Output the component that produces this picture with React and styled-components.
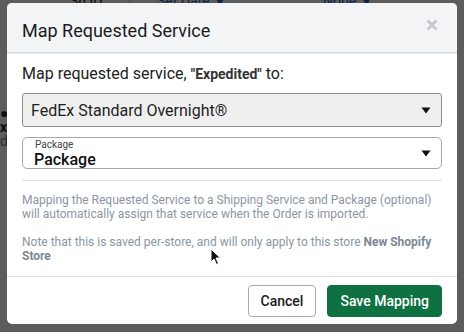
import React from 'react'
import styled, { createGlobalStyle } from 'styled-components'

const GlobalStyle = createGlobalStyle`
  html, body {
    margin: 0;
    padding: 0;
    width: 464px;
    height: 332px;
    overflow: hidden;
    background: #fff;
    font-family: Roboto, "Liberation Sans", Arial, sans-serif;
  }
`

const Screen = styled.div`
  position: relative;
  width: 464px;
  height: 332px;
  overflow: hidden;
`

const Page = styled.div`
  display: flex;
  flex-direction: column;
  margin-top: -9px;
`

const PageHead = styled.div`
  display: flex;
  align-items: center;
  height: 20px;
  font-size: 14px;
`

const HeadCell = styled.div`
  width: ${p => p.w}px;
  padding-left: ${p => p.pad || 0}px;
  color: ${p => (p.link ? '#2a5db0' : '#222')};
  border-right: ${p => (p.sep ? '1px solid #ccc' : 'none')};
  box-sizing: border-box;
`

const PageRow = styled.div`
  height: 14px;
  line-height: 14px;
  font-size: 14px;
  color: ${p => p.c || '#222'};
  margin-top: ${p => p.mt || 0}px;
`

const Backdrop = styled.div`
  position: absolute;
  inset: 0;
  background: rgba(0, 0, 0, 0.64);
`

const Modal = styled.div`
  position: absolute;
  left: 7px;
  top: 3px;
  width: 450px;
  height: 321px;
  background: #fff;
  border-radius: 5px;
  display: flex;
  flex-direction: column;
  overflow: hidden;
`

const Header = styled.div`
  display: flex;
  align-items: center;
  justify-content: space-between;
  height: 49px;
  flex-shrink: 0;
  padding: 0 17px 0 15px;
  background: #f3f4f6;
  border-bottom: 1px solid #d3d6d9;
  box-shadow: 0 1px 1px rgba(0, 0, 0, 0.06);
`

const Title = styled.h2`
  margin: 0;
  font-size: 18px;
  font-weight: 400;
  color: #1b1b1b;
  padding-top: 6px;
`

const Close = styled.button`
  border: 0;
  background: none;
  padding: 0;
  width: 14px;
  height: 14px;
  margin-top: -4px;
  display: flex;
`

const Body = styled.div`
  padding: 11px 15px 0 15px;
  display: flex;
  flex-direction: column;
  flex: 1;
`

const Prompt = styled.div`
  font-size: 16px;
  color: #222;
  line-height: 20px;
  b {
    font-size: 14px;
    font-weight: 700;
    color: #333;
  }
`

const Select = styled.div`
  display: flex;
  align-items: center;
  justify-content: space-between;
  height: ${p => p.h}px;
  margin-top: ${p => p.mt}px;
  box-sizing: border-box;
  padding: 0 10px 0 ${p => (p.stacked ? 11 : 8)}px;
  background: ${p => (p.filled ? '#efefef' : '#fff')};
  border: 1px solid ${p => (p.filled ? '#8f8f8f' : '#a8a8a8')};
  border-radius: ${p => (p.filled ? 3 : 5)}px;
  font-size: 16px;
  color: #1e1e1e;
`

const Stack = styled.div`
  display: flex;
  flex-direction: column;
  padding-top: 1px;
`

const SmallLabel = styled.span`
  font-size: 10px;
  color: #444;
  line-height: 11px;
  margin-left: 1px;
`

const BigValue = styled.span`
  font-size: 16px;
  font-weight: 500;
  color: #111;
  line-height: 19px;
`

const Divider = styled.hr`
  border: 0;
  border-top: 1px solid #dde3e8;
  margin: 11px 0 12px 0;
`

const Note = styled.p`
  margin: 0 0 ${p => p.mb || 0}px 0;
  font-size: 12px;
  line-height: 14px;
  color: #8a96a3;
  b {
    font-weight: 700;
    color: #7c8894;
  }
`

const Footer = styled.div`
  display: flex;
  justify-content: flex-end;
  flex-shrink: 0;
  gap: 11px;
  padding: 8px 15px 0 0;
  height: 48px;
  box-sizing: border-box;
  border-top: 1px solid #dfe2e5;
`

const Button = styled.button`
  height: 32px;
  padding: 0 12px;
  font-family: Roboto, "Liberation Sans", Arial, sans-serif;
  font-size: 14px;
  font-weight: 500;
  border-radius: 4px;
  border: 1px solid ${p => (p.primary ? '#0f7041' : '#a9a9a9')};
  background: ${p => (p.primary ? '#0f7041' : '#fff')};
  color: ${p => (p.primary ? '#fff' : '#1a1a1a')};
  box-sizing: border-box;
`

const Cursor = styled.svg`
  position: absolute;
  left: 210px;
  top: 248px;
`

const Caret = () => (
  <svg width="10" height="7" viewBox="0 0 10 7">
    <path d="M0.5 0.5 H9.5 L5 6.5 Z" fill="#111" />
  </svg>
)

export default function App() {
  return (
    <Screen>
      <GlobalStyle />
      <Page>
        <PageHead>
          <HeadCell w={130} pad={70} sep>Sh ID</HeadCell>
          <HeadCell w={190} pad={27} link>Set Date ▼</HeadCell>
          <HeadCell w={144} pad={3} link>None ▼</HeadCell>
        </PageHead>
        <PageRow mt={95}>●</PageRow>
        <PageRow><b>x</b></PageRow>
        <PageRow c="#777">d</PageRow>
      </Page>
      <Backdrop />
      <Modal>
        <Header>
          <Title>Map Requested Service</Title>
          <Close aria-label="Close">
            <svg width="12" height="12" viewBox="0 0 12 12">
              <path d="M1.5 1.5 L10.5 10.5 M10.5 1.5 L1.5 10.5" stroke="#c3c8cd" strokeWidth="2.6" />
            </svg>
          </Close>
        </Header>
        <Body>
          <Prompt>
            Map requested service, <b>"Expedited"</b> to:
          </Prompt>
          <Select filled h={34} mt={9}>
            <span>FedEx Standard Overnight®</span>
            <Caret />
          </Select>
          <Select stacked h={32} mt={10}>
            <Stack>
              <SmallLabel>Package</SmallLabel>
              <BigValue>Package</BigValue>
            </Stack>
            <Caret />
          </Select>
          <Divider />
          <Note mb={14}>
            Mapping the Requested Service to a Shipping Service and Package (optional) will
            automatically assign that service when the Order is imported.
          </Note>
          <Note>
            Note that this is saved per-store, and will only apply to this store <b>New Shopify Store</b>
          </Note>
        </Body>
        <Footer>
          <Button>Cancel</Button>
          <Button primary>Save Mapping</Button>
        </Footer>
      </Modal>
      <Cursor width="12" height="18" viewBox="0 0 12 18">
        <path d="M1 1 L1 14 L4 11 L6.5 16.5 L8.5 15.5 L6 10 L10.5 10 Z" fill="#111" stroke="#fff" strokeWidth="1" />
      </Cursor>
    </Screen>
  )
}
